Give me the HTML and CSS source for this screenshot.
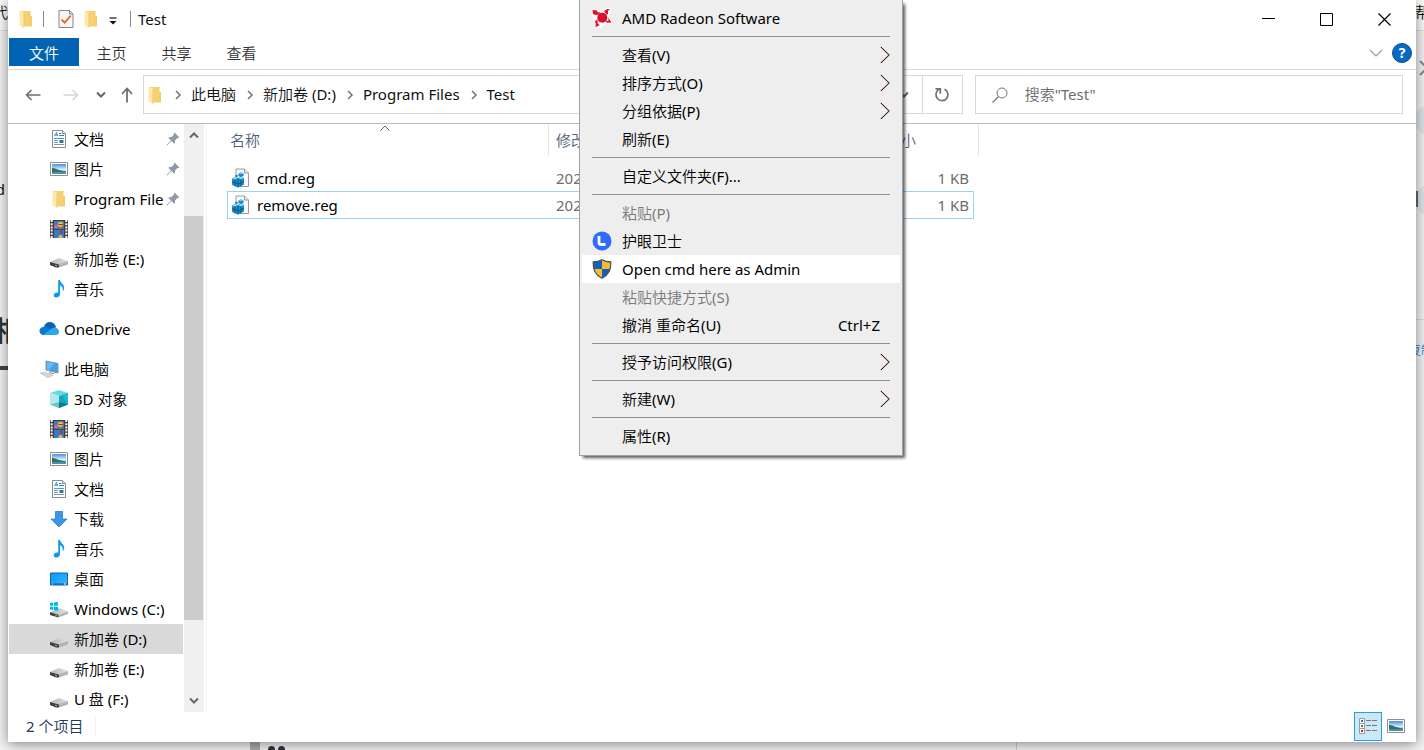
FILE: index.html
```html
<!DOCTYPE html>
<html lang="zh-CN">
<head>
<meta charset="utf-8">
<title>Test</title>
<link rel="stylesheet" href="styles.css">
</head>
<body>
<svg class="defs" aria-hidden="true">
  <defs>
    <linearGradient id="fold" x1="0" x2="1" y1="0" y2="0"><stop offset="0" stop-color="#f7d581"/><stop offset="1" stop-color="#f3cd6c"/></linearGradient>
    <linearGradient id="sky" x1="0" x2="0" y1="0" y2="1"><stop offset="0" stop-color="#4a8fe0"/><stop offset=".55" stop-color="#d4ecfa"/><stop offset="1" stop-color="#5b9fb8"/></linearGradient>
    <linearGradient id="desk" x1="0" x2="1" y1="0" y2="1"><stop offset="0" stop-color="#0c97fb"/><stop offset=".5" stop-color="#1ea5ff"/><stop offset="1" stop-color="#46b6ff"/></linearGradient>
    <linearGradient id="metal" x1="0" x2="1" y1="0" y2="0"><stop offset="0" stop-color="#b4b4b4"/><stop offset="1" stop-color="#e4e4e4"/></linearGradient>
  </defs>
  <symbol id="i-folder" viewBox="0 0 18 18"><path d="M3 1h10.500v5H15v10.500H7z" fill="url(#fold)"/><path d="M2.500 1L7 2.500V18L2.500 15.500z" fill="#ffe9a8"/><path d="M7 3v14.500" stroke="#e9bd58" stroke-width=".7"/></symbol>
  <symbol id="i-doc" viewBox="0 0 18 18"><path d="M2.500.5h10l3 3v14h-13z" fill="#fff" stroke="#8b8b8b"/><path d="M12.500.5v3h3" fill="#eee" stroke="#8b8b8b"/><path d="M4.500 6L6.500 2.500 7.500 6M5.500 5h2M9 3.500h2.500M9 5.500h5" stroke="#1d86d8" fill="none"/><path d="M4 8.500h10M4 10.500h4" stroke="#4a9bd4"/><path d="M4 12.500h4M4 14.500h10" stroke="#8c959c"/><path d="M9.500 10h4v3h-4z" fill="#3275a8"/></symbol>
  <symbol id="i-pic" viewBox="0 0 18 18"><path d="M.5 2.500h17v13H.5z" fill="#fff" stroke="#8f8f8f"/><path d="M2 4h14v10H2z" fill="url(#sky)"/><path d="M2 8c4 0 6 2.500 14 3.500V12.500H2z" fill="#34705b"/><path d="M2 12.500h14V14H2z" fill="#4b8fb3"/></symbol>
  <symbol id="i-video" viewBox="0 0 18 18"><path d="M0 0h18v18H0z" fill="#404040"/><path d="M4 1h10v8H4zM4 10h10v8H4z" fill="#3c75cc"/><path d="M1.700 0v18M16.300 0v18" stroke="#f4f4f4" stroke-width="2" stroke-dasharray="2 1.200"/><circle cx="10.500" cy="4.500" r="2.800" fill="#e6c22e"/><path d="M8.500 4h5v1.200h-5z" fill="#c52b28"/><circle cx="6" cy="6.500" r="1.800" fill="#e36490"/><path d="M8 8h4v1H8z" fill="#43a542"/><circle cx="11" cy="12" r="1.500" fill="#c52b28"/><circle cx="10.500" cy="17" r="2" fill="#e6c22e"/></symbol>
  <symbol id="i-drive" viewBox="0 0 18 18"><path d="M0 12L9 8l9 3-9 3.500z" fill="url(#metal)"/><path d="M9 14L18 11v3.500L9 17.500z" fill="#b4b4b4"/><path d="M0 12l9 2.500v3L6 17.500 0 15z" fill="#3f3f3f"/><path d="M5 15.200l2 .6" stroke="#4cc652" stroke-width="1.300"/></symbol>
  <symbol id="i-win" viewBox="0 0 18 18"><path d="M0 12.500L9 8l9 3.300-9.500 3.500z" fill="url(#metal)"/><path d="M8.500 14.800L18 11.300v2.800L8.500 17.500z" fill="#b4b4b4"/><path d="M0 12.300l8.500 2.500v2.700L0 15z" fill="#3f3f3f"/><path d="M5 15l2 .7" stroke="#4cc652" stroke-width="1.200"/><path d="M0 3l3-.5v3.300H0zM3.800 2.400L8 2v3.800H3.800zM0 6.700h3V10l-3-.5zM3.800 6.700H8v4l-4.200-.6z" fill="#00b6f1"/></symbol>
  <symbol id="i-music" viewBox="0 0 18 18"><path d="M8.200 0h1.700c.5 3 4.800 4.500 4.300 8.500-.2 1.500-1 2.300-1.700 2.800 1-3-.3-5-2.500-6v9c0 2-2 3.500-4.200 3.200-2.300-.3-2.800-2.500-1.300-4 1-1 2.700-1.200 3.700-.8z" fill="#0a9af5"/></symbol>
  <symbol id="i-cloud" viewBox="0 0 20 18"><path d="M5 7C6 1 15 0 17 7l-4 4z" fill="#0b62b4"/><path d="M4 15C-1 14-.5 7 4.500 7c3-1.500 5 1 9 4l-7 4z" fill="#0c78d4"/><path d="M4 15l8-6c1.500-1.500 4.500-2.500 6-.5 3 1.500 2.500 6.500-1 6.500z" fill="#28a8ea"/></symbol>
  <symbol id="i-pc" viewBox="0 0 20 18"><path d="M7 1l12 2.500V13L7 10z" fill="#39a4f0" stroke="#8b9299"/><path d="M8 2l7 1.500-5 7-2-.6z" fill="#83cbfa" opacity=".6"/><path d="M10 12l5 1.200v1L10 13z" fill="#888"/><path d="M1 13l5-.8 8 3.200-5 2.300z" fill="#d4d8da" stroke="#a7abae" stroke-width=".5"/></symbol>
  <symbol id="i-3d" viewBox="0 0 18 18"><path d="M9 0l9 3-9 3-9-3z" fill="#61dbe6"/><path d="M0 3l9 3v12l-9-3.500z" fill="#b3e9ed"/><path d="M9 6l9-3v11.500L9 18z" fill="#17a6bd"/><path d="M0 14.500L9 12v6z" fill="#65c8cb"/><path d="M9 12l9 2.500L9 18z" fill="#087b8d"/><path d="M18 3v11.500L12 5z" fill="#1abbd4"/></symbol>
  <symbol id="i-down" viewBox="0 0 18 18"><path d="M5.500 1.500h7v7.500h4.500L9 17 1 9h4.500z" fill="#3b96e8" stroke="#2b7fcc" stroke-width=".8"/></symbol>
  <symbol id="i-desk" viewBox="0 0 18 18"><path d="M.5 3h17v12H.5z" fill="url(#desk)" stroke="#0c63ab"/><path d="M1 14h16" stroke="#08589c"/><path d="M2 14h1M14 14h2" stroke="#fff"/></symbol>
  <symbol id="i-pin" viewBox="0 0 14 14"><path d="M8.500 0.500l5 5-1.200.6-.8-.2L9 8.500c.3 1.500 0 2.500-.8 3.300L5.500 9 1 13.500.5 13 5 8.500 2.200 5.800C3 5 4 4.700 5.500 5L8 2.500 7.900 1.500z" fill="#8d9ba8"/></symbol>
  <symbol id="i-reg" viewBox="0 0 18 20"><path d="M5 1h8.500l4 4v13.500H5z" fill="#fafafa" stroke="#9a9a9a"/><path d="M13.500 1v4h4" fill="#e7e7e7" stroke="#9a9a9a"/><path d="M1 10.500L3.500 9 6.500 10l3-1.500L13 10v6.500l-5.500 3L1 17z" fill="#1b8fcb"/><path d="M1 10.500L3.500 9l3 1.200L4 11.500zM7 10.200l2.800-1.500L13 10l-3 1.300z" fill="#8fdcf7"/><path d="M1 13.700l6.500 2.300 5.500-2.700M4 11.500v7M10 11.500v6.500M7 10.500v9" stroke="#064a78" stroke-width=".8" fill="none"/><path d="M7.500 5.500L10 4.500l2.500 1V8L10 9 7.500 8z" fill="#1384c2"/><path d="M7.500 5.500l2.500-1 2.500 1-2.500 1z" fill="#66c8ee"/><path d="M4 7.500l1.500-.7 1.500.7v1l-1.500.5L4 8.500z" fill="#1384c2"/></symbol>
  <symbol id="c-right" viewBox="0 0 8 10"><path d="M2 1l4 4-4 4" fill="none" stroke="#777" stroke-width="1.600"/></symbol>
  <symbol id="c-down" viewBox="0 0 10 8"><path d="M1 1.500l4 4 4-4" fill="none" stroke="currentColor" stroke-width="2"/></symbol>
  <symbol id="c-menu" viewBox="0 0 10 18"><path d="M.5 1l8 8-8 8" fill="none" stroke="#e08a45" stroke-width="1"/><path d="M1 1l8.300 8L1 17" fill="none" stroke="#17102c" stroke-width="1"/></symbol>
</svg>

<div class="backdrop" aria-hidden="true">
  <div class="strip-left"><span class="l1">代</span><span class="l2">d</span><span class="l3">相</span><i class="l4"></i></div>
  <div class="strip-right"><span class="r1">帮</span><svg class="r2" viewBox="0 0 8 16"><path d="M1 1l7 7-7 7" fill="none" stroke="#888" stroke-width="2"/></svg><i class="dot r3"></i><i class="dot r4"></i><i class="r5"></i><span class="r6">复制</span></div>
  <div class="strip-bottom"><i class="b1"></i><i class="b2"></i><i class="b2 b3"></i><i class="b4"></i></div>
</div>

<main class="window">
  <header class="titlebar">
    <svg class="ic18"><use href="#i-folder"/></svg>
    <i class="vbar after-folder"></i>
    <svg class="check" viewBox="0 0 16 18"><path d="M1 .5h10.500L15 4v13.500H1z" fill="#f7f7f7" stroke="#858585"/><path d="M11.500.5V4H15" fill="none" stroke="#858585"/><path d="M3.500 9.500l3.200 3.200 6-7" fill="none" stroke="#f0651c" stroke-width="1.800"/></svg>
    <svg class="ic18"><use href="#i-folder"/></svg>
    <svg class="caret" viewBox="0 0 8 8"><path d="M.5 1h7" stroke="#111" stroke-width="1.200"/><path d="M.5 4h7L4 7.500z" fill="#111"/></svg>
    <i class="vbar"></i>
    <h1>Test</h1>
    <div class="caption">
      <button aria-label="最小化"><svg viewBox="0 0 13 13"><path d="M0 5.500h13" stroke="#000"/></svg></button>
      <button aria-label="最大化"><svg viewBox="0 0 13 13"><path d="M.5.5h12v12H.5z" fill="none" stroke="#000"/></svg></button>
      <button aria-label="关闭"><svg viewBox="0 0 13 13"><path d="M.5.5l12 12M12.500.5l-12 12" stroke="#000" stroke-width="1.200"/></svg></button>
    </div>
  </header>

  <nav class="tabs">
    <button class="file">文件</button>
    <button>主页</button>
    <button>共享</button>
    <button>查看</button>
    <span class="tabs-end">
      <svg class="expand" viewBox="0 0 14 8"><path d="M1 1l6 6 6-6" fill="none" stroke="#999" stroke-width="1.200"/></svg>
      <button class="help" aria-label="帮助">?</button>
    </span>
  </nav>

  <div class="addressrow">
    <div class="history">
      <button aria-label="后退"><svg class="arrow" viewBox="0 0 16 12"><path d="M15.500 6H1.500M6.500 1l-5 5 5 5" fill="none" stroke="#6f6f6f" stroke-width="1.600"/></svg></button>
      <button aria-label="前进"><svg class="arrow" viewBox="0 0 16 12"><path d="M.5 6h14M9.500 1l5 5-5 5" fill="none" stroke="#d6d6d6" stroke-width="1.600"/></svg></button>
      <button class="recent" aria-label="最近"><svg class="cd"><use href="#c-down"/></svg></button>
      <button class="up" aria-label="向上"><svg class="uparrow" viewBox="0 0 12 16"><path d="M6 15.500V1.500M1 7l5-5.500L11 7" fill="none" stroke="#6f6f6f" stroke-width="1.800"/></svg></button>
    </div>
    <div class="address">
      <svg class="ic18"><use href="#i-folder"/></svg>
      <svg class="cr"><use href="#c-right"/></svg><a href="#">此电脑</a>
      <svg class="cr"><use href="#c-right"/></svg><a href="#">新加卷 (D:)</a>
      <svg class="cr"><use href="#c-right"/></svg><a href="#">Program Files</a>
      <svg class="cr"><use href="#c-right"/></svg><a href="#">Test</a>
      <button class="drop" aria-label="历史"><svg class="cd"><use href="#c-down"/></svg></button>
      <button class="refresh" aria-label="刷新"><svg viewBox="0 0 16 16"><path d="M10.500 2.200a6 6 0 1 1-5.800.4" fill="none" stroke="#6f6f6f" stroke-width="1.700"/><path d="M1.500 1.800h4.800v5" fill="none" stroke="#6f6f6f" stroke-width="1.700"/></svg></button>
    </div>
    <label class="search">
      <svg viewBox="0 0 16 16"><circle cx="10" cy="6" r="5" fill="none" stroke="#777"/><path d="M6.500 9.500L.5 15.500" stroke="#777" stroke-width="1.200"/></svg>
      <input type="text" placeholder='搜索"Test"' aria-label="搜索">
    </label>
  </div>

  <div class="body">
    <ul class="tree">
      <li><svg class="ic18"><use href="#i-doc"/></svg><span>文档</span><svg class="pin"><use href="#i-pin"/></svg></li>
      <li><svg class="ic18"><use href="#i-pic"/></svg><span>图片</span><svg class="pin"><use href="#i-pin"/></svg></li>
      <li><svg class="ic18"><use href="#i-folder"/></svg><span>Program Files</span><svg class="pin"><use href="#i-pin"/></svg></li>
      <li><svg class="ic18"><use href="#i-video"/></svg><span>视频</span></li>
      <li><svg class="ic18"><use href="#i-drive"/></svg><span>新加卷 (E:)</span></li>
      <li><svg class="ic18"><use href="#i-music"/></svg><span>音乐</span></li>
      <li class="root"><svg class="ic20"><use href="#i-cloud"/></svg><span>OneDrive</span></li>
      <li class="root"><svg class="ic20"><use href="#i-pc"/></svg><span>此电脑</span></li>
      <li><svg class="ic18"><use href="#i-3d"/></svg><span>3D 对象</span></li>
      <li><svg class="ic18"><use href="#i-video"/></svg><span>视频</span></li>
      <li><svg class="ic18"><use href="#i-pic"/></svg><span>图片</span></li>
      <li><svg class="ic18"><use href="#i-doc"/></svg><span>文档</span></li>
      <li><svg class="ic18"><use href="#i-down"/></svg><span>下载</span></li>
      <li><svg class="ic18"><use href="#i-music"/></svg><span>音乐</span></li>
      <li><svg class="ic18"><use href="#i-desk"/></svg><span>桌面</span></li>
      <li><svg class="ic18"><use href="#i-win"/></svg><span>Windows (C:)</span></li>
      <li class="selected"><svg class="ic18"><use href="#i-drive"/></svg><span>新加卷 (D:)</span></li>
      <li><svg class="ic18"><use href="#i-drive"/></svg><span>新加卷 (E:)</span></li>
      <li><svg class="ic18"><use href="#i-drive"/></svg><span>U 盘 (F:)</span></li>
    </ul>
    <div class="scrollbar">
      <svg class="cd flip"><use href="#c-down"/></svg>
      <div class="track"><i class="thumb"></i></div>
      <svg class="cd"><use href="#c-down"/></svg>
    </div>
    <section class="files">
      <table>
        <colgroup><col class="c-name"><col class="c-date"><col class="c-type"><col class="c-size"><col class="c-end"></colgroup>
        <thead><tr><th class="sorted">名称<svg class="sort" viewBox="0 0 10 6"><path d="M.5 5.500l4.500-4.500 4.500 4.500" fill="none" stroke="#666"/></svg></th><th>修改日期</th><th>类型</th><th>大小</th><th class="end"></th></tr></thead>
        <tbody>
          <tr><td class="name"><svg class="reg"><use href="#i-reg"/></svg>cmd.reg</td><td>202</td><td></td><td class="size">1 KB</td><td class="end"></td></tr>
          <tr class="focus"><td class="name"><svg class="reg"><use href="#i-reg"/></svg>remove.reg</td><td>202</td><td></td><td class="size">1 KB</td><td class="end"></td></tr>
        </tbody>
      </table>
    </section>
  </div>

  <footer class="status">
    <span class="count">2 个项目</span>
    <button class="view on" aria-label="详细信息"><svg viewBox="0 0 18 16"><path d="M.5.5h5v5h-5zM.5 5.500h5v5h-5zM.5 10.500h5v5h-5z" fill="#fff" stroke="#999"/><path d="M2 2h2v2H2z" fill="#356e78"/><path d="M2 7h2v2H2z" fill="#5b7651"/><path d="M2 12h2v2H2z" fill="#b8301b"/><path d="M7 2.500h5M13 2.500h5M7 7.500h5M13 7.500h5M7 12.500h5M13 12.500h5" stroke="#777"/></svg></button>
    <button class="view" aria-label="大图标"><svg class="ic18"><use href="#i-pic"/></svg></button>
  </footer>
</main>

<div class="menu" role="menu">
  <button role="menuitem"><svg class="mi" viewBox="0 0 20 20"><path d="M0 1h5l3 2 4-1 3-2.500h3.500L17 6l3 8-1 2-5-.5L9 20H3l1-6-3-3.500L0 6z" fill="#fff"/><path d="M1 6l-.5-4 4 .3L6 4.500 8.500 4 7 6.500 3.500 7zM12 3l3.500-2h2.200L16 3v2.500L15 7l-2-2.500zM19.500 14.500l-4.500.3-1.500-1.600 3-.4-.3-3.300zM3.500 19.300l.3-3.600L3 13l2.500-1.500.3 4.500L8 17z" fill="#dc1030"/><circle cx="10.300" cy="9.800" r="5" fill="#e00c2e"/></svg>AMD Radeon Software</button>
  <hr>
  <button role="menuitem">查看(V)<svg class="sub"><use href="#c-menu"/></svg></button>
  <button role="menuitem">排序方式(O)<svg class="sub"><use href="#c-menu"/></svg></button>
  <button role="menuitem">分组依据(P)<svg class="sub"><use href="#c-menu"/></svg></button>
  <button role="menuitem">刷新(E)</button>
  <hr>
  <button role="menuitem">自定义文件夹(F)...</button>
  <hr>
  <button role="menuitem" disabled>粘贴(P)</button>
  <button role="menuitem"><svg class="mi" viewBox="0 0 20 20"><circle cx="10" cy="10" r="9.500" fill="#2f6bff"/><path d="M7 5v6.500q0 2 2 2h4.500" fill="none" stroke="#fff" stroke-width="2.800"/></svg>护眼卫士</button>
  <button role="menuitem" class="hot"><svg class="mi" viewBox="0 0 20 20"><path d="M10 .8C7.500 2.300 4 3 1.200 3c-.3 8 2 13 8.800 16.200C16.800 16 19.100 11 18.800 3 16 3 12.500 2.300 10 .8z" fill="#0f63bd" stroke="#4d5257" stroke-width="1.300"/><path d="M10 1.500c2.500 1.300 5.200 2 8.100 2.200.1 2.300-.1 4.500-.7 6.300H10zM2.600 10H10v8.400C6 16.400 3.800 13.900 2.600 10z" fill="#fdb92a"/></svg>Open cmd here as Admin</button>
  <button role="menuitem" disabled>粘贴快捷方式(S)</button>
  <button role="menuitem">撤消 重命名(U)<kbd>Ctrl+Z</kbd></button>
  <hr>
  <button role="menuitem">授予访问权限(G)<svg class="sub"><use href="#c-menu"/></svg></button>
  <hr>
  <button role="menuitem">新建(W)<svg class="sub"><use href="#c-menu"/></svg></button>
  <hr>
  <button role="menuitem">属性(R)</button>
</div>
</body>
</html>
```

FILE: styles.css
```css
* { box-sizing: border-box; }
html, body { height: 100%; }
body {
  margin: 0;
  padding: 0 8px 8px;
  overflow: hidden;
  background: #f2f2f2;
  color: #111;
  font: 400 15px/20px "Noto Sans", "Noto Sans CJK SC DemiLight", "Noto Sans CJK SC Light", "Noto Sans CJK SC", sans-serif;
}
button {
  margin: 0;
  padding: 0;
  border: 0;
  background: none;
  color: inherit;
  font: inherit;
}
a { color: inherit; text-decoration: none; }
svg { display: block; flex: none; }
.defs { position: absolute; width: 0; height: 0; }
.ic18 { width: 18px; height: 18px; }
.ic20 { width: 20px; height: 18px; }
.cd { width: 10px; height: 8px; color: #666; }

/* Page behind the window */
.backdrop span, .backdrop i, .backdrop svg { position: absolute; white-space: nowrap; }
.strip-left, .strip-right, .strip-bottom { position: absolute; overflow: hidden; }
.strip-left { left: 0; top: 0; bottom: 0; width: 8px; }
.strip-right { right: 0; top: 0; bottom: 0; width: 8px; }
.strip-bottom { left: 0; right: 0; bottom: 0; height: 8px; }
.strip-left::before, .strip-right::before {
  content: "";
  display: block;
  height: 30px;
  background: #fafafa;
  border-bottom: 1px solid #ddd;
}
.l1 { right: 0; top: 2px; }
.l2 { right: 3px; top: 179px; }
.l3 { left: -6px; top: 316px; font-size: 27px; line-height: 30px; font-weight: 700; color: #333; }
.l4 { left: 0; top: 366px; width: 8px; height: 4px; background: #444; }
.r1 { right: -6px; top: 2px; }
.r2 { left: 3px; top: 60px; width: 8px; height: 16px; }
.dot { left: 0; width: 30px; height: 30px; border-radius: 12px; background: #dde3ea; }
.r3 { top: 105px; }
.r4 { top: 185px; }
.r4::before { content: ""; position: absolute; left: 0; top: 6px; width: 2px; height: 16px; background: #667; }
.r5 { left: 0; top: 319px; width: 8px; height: 1px; background: #d8d8d8; }
.r6 { left: -7px; top: 341px; font-size: 12px; color: #1673c5; }
.b1 { left: 250px; top: 0; width: 10px; height: 8px; background: #aaa; }
.b2 { left: 268px; top: 4px; width: 7px; height: 7px; border-radius: 4px; background: #334; }
.b3 { left: 278px; }
.b4 { left: 1016px; top: 0; width: 1px; height: 8px; background: #ccc; }

/* Explorer window */
.window {
  position: relative;
  display: flex;
  flex-direction: column;
  height: 100%;
  background: #fff;
  box-shadow: 0 2px 12px rgba(0, 0, 0, .45);
}
.titlebar { display: flex; align-items: center; height: 38px; padding-left: 9px; }
.vbar { width: 1px; height: 16px; background: #888; }
.after-folder { margin: 0 14px 0 8px; }
.check { width: 16px; height: 18px; margin-right: 8px; }
.caret { width: 8px; height: 8px; margin: 4px 13px 0 9px; }
.titlebar h1 { margin: 0 0 0 7px; font-size: 15px; font-weight: inherit; }
.caption { display: flex; height: 38px; margin-left: auto; padding-right: 3px; }
.caption button { display: grid; place-items: center; width: 58px; }
.caption svg { width: 13px; height: 13px; }

.tabs {
  display: flex;
  align-items: flex-start;
  height: 32px;
  padding-left: 1px;
  border-bottom: 1px solid #dadada;
  color: #333;
}
.tabs button { width: 65px; height: 28px; padding-top: 2px; }
.tabs .file { width: 70px; background: #0163b1; color: #fff; }
.tabs-end { display: flex; align-items: center; gap: 9px; height: 30px; margin-left: auto; padding-right: 4px; }
.expand { width: 14px; height: 8px; }
.tabs .help {
  width: 20px;
  height: 20px;
  padding: 0;
  border: 1px solid #084f91;
  border-radius: 50%;
  background: #0669c4;
  color: #fff;
  font-size: 14px;
  line-height: 18px;
  font-weight: 700;
}

.addressrow { display: flex; height: 54px; padding: 5px 13px 9px 0; border-bottom: 1px solid #bbb; }
.history { display: flex; align-items: center; width: 135px; padding-left: 17px; }
.history button { margin-right: 22px; }
.history button:nth-child(2) { margin-right: 17px; }
.history .recent { margin-right: 15px; }
.history .up { margin: 0; }
.arrow { width: 16px; height: 12px; }
.uparrow { width: 12px; height: 16px; }
.address { display: flex; align-items: center; flex: 815 1 0; border: 1px solid #d9d9d9; padding-left: 2px; }
.address a { padding-bottom: 2px; }
.cr { width: 8px; height: 10px; margin: 0 9px 0 10px; }
.address .drop { display: grid; place-items: center; width: 36px; height: 100%; margin-left: auto; border-right: 1px solid #d9d9d9; }
.address .refresh { display: grid; place-items: center; width: 39px; height: 100%; }
.refresh svg { width: 16px; height: 16px; }
.search { display: flex; align-items: center; flex: 394 1 0; gap: 17px; margin-left: 12px; padding: 0 16px; border: 1px solid #d9d9d9; }
.search svg { width: 16px; height: 16px; }
.search input { flex: 1; min-width: 0; padding: 0 0 2px; border: 0; outline: 0; background: none; font: inherit; }
.search input::placeholder { color: #6d6d6d; opacity: 1; }

.body { display: flex; flex: 1; min-height: 0; }
.tree { width: 175px; margin: 0; padding: 0 0 0 1px; overflow: hidden; list-style: none; color: #000; }
.tree li { display: flex; align-items: center; gap: 6px; height: 30px; padding-left: 41px; white-space: nowrap; }
.tree li span { flex: 1; min-width: 0; overflow: hidden; }
.tree .root { gap: 5px; margin: 10px 0; padding-left: 30px; }
.tree .root + li { margin: 0; }
.tree .root + .root { margin: 10px 0 0; }
.tree .selected { background: #d9d9d9; }
.pin { width: 14px; height: 14px; margin: 0 3px 0 -3px; }
.scrollbar {
  display: flex;
  flex-direction: column;
  align-items: center;
  width: 20px;
  margin: 0 0 0 1px;
  padding: 7px 0;
  background: #f0f0f0;
}
.flip { transform: rotate(180deg); }
.track { display: flex; flex: 1; width: 100%; padding: 77px 0; }
.thumb { flex: 1; margin-right: 1px; background: #cdcdcd; }
.files { flex: 1; margin-left: 2px; padding-left: 20px; border-left: 1px solid #f2f2f2; }

table { width: 752px; table-layout: fixed; border-collapse: separate; border-spacing: 0; color: #6d6d6d; }
.c-name { width: 322px; }
.c-date { width: 160px; }
.c-type { width: 170px; }
.c-size { width: 95px; }
.c-end { width: 5px; }
th { height: 32px; padding: 0 7px; color: #4f5f80; font-weight: inherit; text-align: left; }
td { height: 27px; padding: 0 7px; }
th:first-child { padding-left: 3px; }
th:first-child, th.end { border-right: 1px solid #e5e5e5; }
th.end, td.end { padding: 0; }
.sorted { position: relative; }
.sort { position: absolute; left: 153px; top: 1px; width: 10px; height: 6px; }
tbody::before { content: ""; display: block; height: 8px; }
td.name { display: flex; align-items: center; gap: 8px; padding: 0 0 0 4px; color: #000; }
.reg { width: 18px; height: 20px; }
td.size { padding-right: 5px; text-align: right; }
.focus td { height: 28px; border: solid #99d1ff; border-width: 1px 0; }
.focus td.name { padding-left: 3px; border-left-width: 1px; }
.focus td.size { padding-right: 4px; border-right-width: 1px; }
.focus td.end { border: 0; }

.status { display: flex; align-items: center; height: 30px; padding: 0 6px 2px 18px; color: #1e395b; }
.count { padding-right: 12px; border-right: 1px solid #f2f2f2; margin-right: auto; }
.view { display: grid; place-items: center; width: 28px; height: 29px; }
.view svg:not(.ic18) { width: 18px; height: 16px; }
.view.on { border: 1px solid #26a0da; background: #cbe8f6; }

/* Context menu */
.menu {
  position: absolute;
  left: 579px;
  top: 0;
  width: 324px;
  padding: 4px 2px 5px;
  border: 1px solid #a0a0a0;
  border-top: 0;
  background: #eee;
  box-shadow: 3px 3px 3px -1px rgba(0, 0, 0, .65);
  color: #000;
}
.menu button { display: flex; align-items: center; position: relative; width: 100%; height: 28px; padding: 0 10px 0 40px; text-align: left; }
.menu button:disabled { color: #7a7a7a; }
.menu .hot { background: #fff; }
.menu hr { height: 1px; margin: 4px 10px; border: 0; background: #919191; }
.mi { width: 20px; height: 20px; margin: 0 10px 0 -30px; }
.sub { width: 10px; height: 18px; margin-left: auto; }
.menu kbd { margin: 0 10px 0 auto; font: inherit; }
```
